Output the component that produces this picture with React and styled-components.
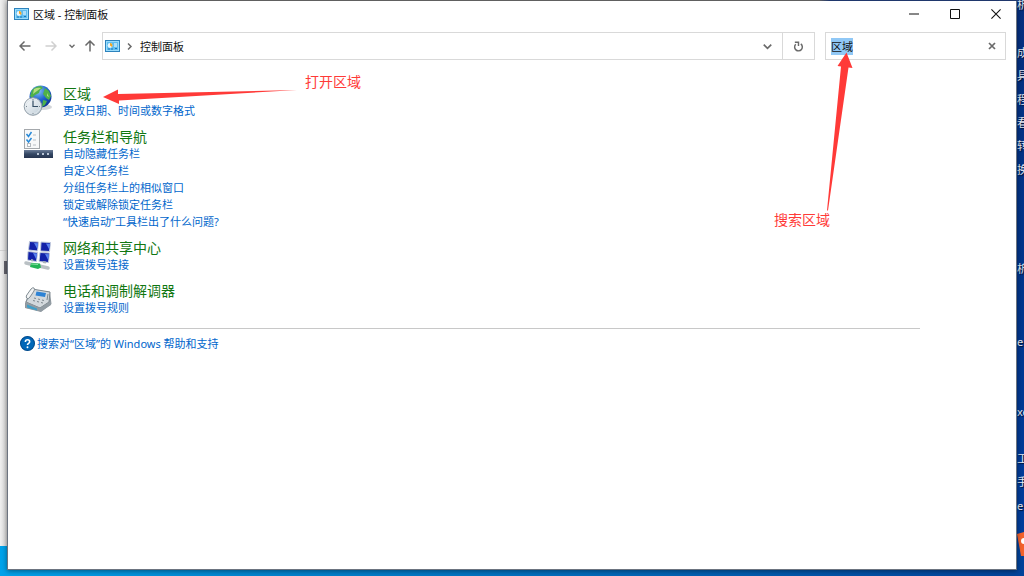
import React, { useEffect, useRef } from 'react'
import styled, { createGlobalStyle } from 'styled-components'

const GlobalStyle = createGlobalStyle`
  * {
    box-sizing: border-box;
  }

  body {
    margin: 0;
    overflow: hidden;
    font-family: "Noto Sans", "Noto Sans CJK SC", sans-serif;
    font-size: 11px;
    line-height: 17px;
    color: #111;
  }

  button,
  input {
    font: inherit;
    color: inherit;
  }

  svg {
    display: block;
    flex: none;
  }
`

const Desktop = styled.div`
  position: relative;
  display: flex;
  min-height: 100vh;
  padding: 1px 7px 6px;
  overflow: hidden;
  background:
    linear-gradient(90deg, #6f6f6f 80%, #24407c 81%) 0 0 / 100% 1px no-repeat,
    linear-gradient(90deg, #00a2ea 0%, #0086d0 24%, #0068b8 60%, #00429a 100%) 0 100% / 100% 30px no-repeat,
    linear-gradient(180deg, #052f7f 0%, #00358c 50%, #003f9f 100%);
`

const BackWindow = styled.div`
  position: absolute;
  top: 0;
  bottom: 30px;
  left: 0;
  width: 7px;
  background:
    linear-gradient(#62626c, #62626c) 4px 261px / 3px 13px no-repeat,
    linear-gradient(#d0d0d0, #d0d0d0) 0 250px / 7px 1px no-repeat,
    linear-gradient(90deg, #efefef, #d6d6d6);
`

const DesktopLabel = styled.span`
  position: absolute;
  top: ${props => props.$top}px;
  left: calc(100% - 7px);
  white-space: nowrap;
  color: #e6ebf5;
  text-shadow: 1px 1px 1px #001030;
`

const DesktopApp = styled.svg`
  position: absolute;
  right: 0;
  bottom: 20px;
`

const Window = styled.main`
  position: relative;
  flex: 1;
  min-width: 0;
  background: #fff;
  border: solid #6c7480;
  border-width: 0 1px 1px;
  box-shadow: 0 1px 5px rgba(0, 0, 0, 0.45);
`

const TitleBar = styled.header`
  display: flex;
  align-items: center;
  height: 26px;
  padding-left: 6px;
`

const Title = styled.h1`
  flex: 1;
  margin: 0 0 0 4px;
  font-size: 11px;
  font-weight: 400;
`

const IconButton = styled.button`
  display: flex;
  align-items: center;
  justify-content: center;
  flex: none;
  width: ${props => props.$width}px;
  height: 26px;
  padding: 0;
  border: 0;
  background: none;
  color: ${props => props.$color || '#6a6a6a'};
`

const NavBar = styled.nav`
  display: flex;
  align-items: center;
  padding: 5px 10px 4px 4px;
`

const Field = styled.div`
  display: flex;
  align-items: center;
  height: 28px;
  border: 1px solid #d9d9d9;
`

const Address = styled(Field)`
  flex: 1;
  gap: 5px;
  margin-left: 2px;
  padding-left: 2px;
`

const Crumb = styled.a`
  flex: 1;
  margin-left: 2px;
  color: #111;
  text-decoration: none;
`

const Refresh = styled(IconButton)`
  border-left: 1px solid #d9d9d9;
`

const Search = styled(Field)`
  width: 181px;
  margin-left: 10px;
  padding-left: 5px;
`

const SearchInput = styled.input`
  flex: 1;
  min-width: 0;
  padding: 0;
  border: 0;
  outline: 0;
  background: none;

  &::selection {
    background: #90c8f6;
    color: #111;
  }
`

const Results = styled.div`
  max-width: 924px;
  padding: 21px 12px;
`

const List = styled.div`
  display: flex;
  flex-direction: column;
  gap: 9px;
  padding: 0 3px 12px;
  border-bottom: 1px solid #c8c8c8;
`

const Entry = styled.section`
  display: flex;
  gap: 10px;
`

const EntryText = styled.div`
  display: flex;
  flex-direction: column;
  align-items: flex-start;
`

const EntryTitle = styled.h2`
  margin: 0;
  font-size: 14px;
  font-weight: 400;
  line-height: 17px;

  a {
    color: #117711;
    text-decoration: none;
  }
`

const TaskLink = styled.a`
  color: #0066cc;
  text-decoration: none;
`

const Help = styled.footer`
  display: flex;
  align-items: center;
  gap: 2px;
  padding-top: 6px;
`

const Arrow = styled.svg`
  position: absolute;
  top: ${props => props.$top}px;
  left: ${props => props.$left};
  right: ${props => props.$right};
  fill: #ff3a38;
`

const Note = styled.span`
  position: absolute;
  top: ${props => props.$top}px;
  left: ${props => props.$left};
  right: ${props => props.$right};
  font-size: 14px;
  color: #ff3a38;
`

const PanelIcon = () => (
  <svg width="15" height="12" viewBox="0 0 15 12">
    <rect x="0.5" y="0.5" width="14" height="11" fill="#5fbdf0" stroke="#2d83bd" />
    <rect x="1.5" y="1.5" width="12" height="9" fill="none" stroke="#9bdcfb" />
    <circle cx="5" cy="5.5" r="2.4" fill="#e9f6fc" />
    <path d="M5 5.5V3a2.5 2.5 0 0 1 2 4z" fill="#f5a623" />
    <path d="M9 4h3M9 6h3" stroke="#fff" />
    <path d="M3 9h2M6 9h2M10 8.5h2" stroke="#1b76b8" />
  </svg>
)

const Stroke = ({ size = 12, width = 1.5, d }) => (
  <svg
    width={size}
    height={size}
    viewBox="0 0 12 12"
    fill="none"
    stroke="currentColor"
    strokeWidth={width}
  >
    <path d={d} />
  </svg>
)

const RegionIcon = () => (
  <svg width="30" height="32" viewBox="0 0 30 32">
    <defs>
      <radialGradient id="globe" cx="0.4" cy="0.25" r="0.8">
        <stop offset="0" stopColor="#8cc4f5" />
        <stop offset="0.5" stopColor="#2166cf" />
        <stop offset="1" stopColor="#0a2c91" />
      </radialGradient>
      <linearGradient id="clock" x1="0" y1="0" x2="1" y2="1">
        <stop offset="0" stopColor="#fff" />
        <stop offset="1" stopColor="#bccbd6" />
      </linearGradient>
    </defs>
    <ellipse cx="20" cy="22" rx="9" ry="3" fill="#b5bbc0" opacity="0.6" />
    <circle cx="17.5" cy="11.5" r="11" fill="url(#globe)" />
    <path d="M9 5q4-4 9-4l2 2-3 2-1 3-4 2-3 3-2-2zM22 3l4 3 2 5-2 4-3-2-3-4 1-3zM20 15l4 1-2 4-3 2z" fill="#4fb14a" />
    <path d="M11 4q4-2 7-1l-4 3-4 3zM24 8l2 4-2-1z" fill="#b4df80" />
    <circle cx="10" cy="21.5" r="8.8" fill="url(#clock)" stroke="#909da7" />
    <circle cx="10" cy="21.5" r="7" fill="none" stroke="#dde5ea" />
    <path d="M10 14v1M10 28v1M3 21.5h1M16 21.5h1" stroke="#7a8790" />
    <path d="M10 15.5v6h5" fill="none" stroke="#344d63" strokeWidth="1.2" />
  </svg>
)

const TaskbarIcon = () => (
  <svg width="30" height="32" viewBox="0 0 30 32">
    <defs>
      <linearGradient id="bar" x1="0" y1="0" x2="0" y2="1">
        <stop offset="0" stopColor="#6d7d98" />
        <stop offset="0.5" stopColor="#344764" />
        <stop offset="1" stopColor="#26344f" />
      </linearGradient>
    </defs>
    <rect x="1.5" y="1.5" width="15" height="19" fill="#f7f8f9" stroke="#a4a8ac" />
    <path d="M3.5 6l2 2.5L8.5 4M3.5 11.5l2 2.5L8.5 10" fill="none" stroke="#2789d8" strokeWidth="1.5" />
    <rect x="4.5" y="15.5" width="3" height="3" fill="#fff" stroke="#b3b9bf" />
    <path d="M10 7h3M10 12h3M10 17h3" stroke="#b8bec4" />
    <rect x="1" y="22" width="29" height="8" fill="url(#bar)" />
    <path d="M14 26h2M19 26h2M24 26h2" stroke="#b9c5d6" strokeWidth="2" />
  </svg>
)

const NetworkIcon = () => (
  <svg width="30" height="32" viewBox="0 0 30 32">
    <g fill="#1221a8" stroke="#c5cede">
      <path d="M6.5 2.5l9 .5-1 9-9-1z" />
      <path d="M18 3l9.5.5-1 9-9-.5z" />
      <path d="M5 12.5l9.5 1-1 9-9-1.5z" />
      <path d="M17 13.5l9.5.5-1 9.5-9.5-1z" />
    </g>
    <path d="M11 4l4 .2-.6 6zM23 4.5l4 .2-.6 6zM10 14l4 .5-.7 6zM22 15l4 .2-.7 6z" fill="#5a82ee" />
    <path d="M8 21l2 .5M20 23l3 .5" stroke="#aab2bb" strokeWidth="2" />
    <path d="M3 24l22 5" stroke="#b9c0c4" strokeWidth="3.5" strokeLinecap="round" />
    <path d="M8 24l9 .5 1 4-3 1.5-8-2z" fill="#22b455" />
    <path d="M8 25l7 .5" stroke="#83e29c" />
  </svg>
)

const PhoneIcon = () => (
  <svg width="30" height="32" viewBox="0 0 30 32">
    <path d="M2 21l6-14 19 3 1.5 12L18 30 2 26z" fill="#8e979e" />
    <path d="M3 20L9 7l18 3-1 10-9 6z" fill="#d3d9dd" stroke="#7c868d" />
    <path d="M3 20l14 6 11-7v4L18 29.5 3 26z" fill="#929ca3" />
    <path d="M4 22.5l10 4v2l-10-3z" fill="#3f9fc9" />
    <path d="M13.5 9.5l9.5 1.5-1 4-9.5-1.5z" fill="#2c82d5" />
    <path d="M11 16l2 .5M15 17l2 .5M19 18l2 .5M10 18.5l2 .5M14 19.5l2 .5M18 20.5l2 .5" stroke="#7e888f" />
    <path d="M3.5 16q-1-2 1-4L8 7q2-2 3-1t0 3l-4 6q-2 3-3.5 1z" fill="#f1f3f4" stroke="#818c93" />
    <path d="M25 12l-1 6" stroke="#7e898f" />
  </svg>
)

const HelpIcon = () => (
  <svg width="15" height="15" viewBox="0 0 14 14">
    <circle cx="7" cy="7" r="6.5" fill="#0067b8" stroke="#004a8c" />
    <path d="M5 5.5Q5 3.5 7 3.5T9 5.3Q9 6.3 8 6.9T7 8.5" fill="none" stroke="#fff" strokeWidth="1.5" />
    <circle cx="7" cy="10.5" r="0.9" fill="#fff" />
  </svg>
)

const entries = [
  {
    title: '区域',
    icon: <RegionIcon />,
    tasks: ['更改日期、时间或数字格式']
  },
  {
    title: '任务栏和导航',
    icon: <TaskbarIcon />,
    tasks: [
      '自动隐藏任务栏',
      '自定义任务栏',
      '分组任务栏上的相似窗口',
      '锁定或解除锁定任务栏',
      '“快速启动”工具栏出了什么问题?'
    ]
  },
  {
    title: '网络和共享中心',
    icon: <NetworkIcon />,
    tasks: ['设置拨号连接']
  },
  {
    title: '电话和调制解调器',
    icon: <PhoneIcon />,
    tasks: ['设置拨号规则']
  }
]

const labels = [
  [-4, '析'],
  [44, '成'],
  [67, '具'],
  [91, '程'],
  [114, '看'],
  [137, '转'],
  [161, '换'],
  [260, '析'],
  [333, 'e'],
  [403, 'xe'],
  [450, '工'],
  [473, '手'],
  [497, 'e']
]

export default function App() {
  const search = useRef(null)

  useEffect(() => {
    search.current.focus()
    search.current.select()
  }, [])

  return (
    <Desktop>
      <GlobalStyle />
      <BackWindow />
      {labels.map(([top, text]) => (
        <DesktopLabel key={top} $top={top}>{text}</DesktopLabel>
      ))}
      <DesktopApp width="7" height="24" viewBox="0 0 7 24">
        <path d="M0 2l7-2v24H4z" fill="#f4622c" />
        <circle cx="7" cy="9" r="3" fill="#fff" />
      </DesktopApp>
      <Window>
        <TitleBar>
          <PanelIcon />
          <Title>区域 - 控制面板</Title>
          <IconButton $width={41} $color="#111" aria-label="最小化">
            <Stroke size={10} width={1.2} d="M0 6h12" />
          </IconButton>
          <IconButton $width={41} $color="#111" aria-label="最大化">
            <Stroke size={10} width={1.2} d="M.6.6h10.8v10.8H.6z" />
          </IconButton>
          <IconButton $width={41} $color="#111" aria-label="关闭">
            <Stroke size={10} width={1.3} d="M.5.5l11 11M11.5.5l-11 11" />
          </IconButton>
        </TitleBar>
        <NavBar>
          <IconButton $width={26} aria-label="后退">
            <Stroke d="M11.5 6H1M5.5 1.5L1 6l4.5 4.5" />
          </IconButton>
          <IconButton $width={26} $color="#d0d0d0" aria-label="前进">
            <Stroke d="M.5 6H11M6.5 1.5L11 6l-4.5 4.5" />
          </IconButton>
          <IconButton $width={16} aria-label="最近浏览的位置">
            <Stroke size={6} width={2.6} d="M1 3.5l5 5 5-5" />
          </IconButton>
          <IconButton $width={20} aria-label="上移">
            <Stroke d="M6 11.5V1M1.5 5.5L6 1l4.5 4.5" />
          </IconButton>
          <Address>
            <PanelIcon />
            <IconButton $width={8} aria-label="展开">
              <Stroke size={7} width={2.6} d="M3.5 1l5 5-5 5" />
            </IconButton>
            <Crumb href="#panel">控制面板</Crumb>
            <IconButton $width={20} aria-label="以前的位置">
              <Stroke size={9} width={2.2} d="M1 3.5l5 5 5-5" />
            </IconButton>
            <Refresh $width={32} aria-label="刷新">
              <Stroke size={11} width={1.6} d="M8.5 3.2A4.2 4.2 0 1 1 3 3.6M2 1.4h4v4" />
            </Refresh>
          </Address>
          <Search>
            <SearchInput ref={search} aria-label="搜索控制面板" defaultValue="区域" />
            <IconButton $width={26} aria-label="清除">
              <Stroke size={8} width={2.6} d="M1.5 1.5l9 9M10.5 1.5l-9 9" />
            </IconButton>
          </Search>
        </NavBar>
        <Results>
          <List>
            {entries.map(entry => (
              <Entry key={entry.title}>
                {entry.icon}
                <EntryText>
                  <EntryTitle><a href="#entry">{entry.title}</a></EntryTitle>
                  {entry.tasks.map(task => (
                    <TaskLink key={task} href="#task">{task}</TaskLink>
                  ))}
                </EntryText>
              </Entry>
            ))}
          </List>
          <Help>
            <HelpIcon />
            <TaskLink href="#help">搜索对“区域”的 Windows 帮助和支持</TaskLink>
          </Help>
        </Results>
        <Arrow $top={88} $left="95px" width="194" height="16" viewBox="103 89 194 16">
          <path d="M103 97l15-7.5V94l179-4-178 10.5v3.5z" />
        </Arrow>
        <Note $top={72} $left="297px">打开区域</Note>
        <Arrow $top={51} $right="162px" width="28" height="159" viewBox="826 52 28 159">
          <path d="M846.5 52.5l6 15.5-4-.5L828 210.5h-1l14-144-3.5-.5z" />
        </Arrow>
        <Note $top={210} $right="186px">搜索区域</Note>
      </Window>
    </Desktop>
  )
}
